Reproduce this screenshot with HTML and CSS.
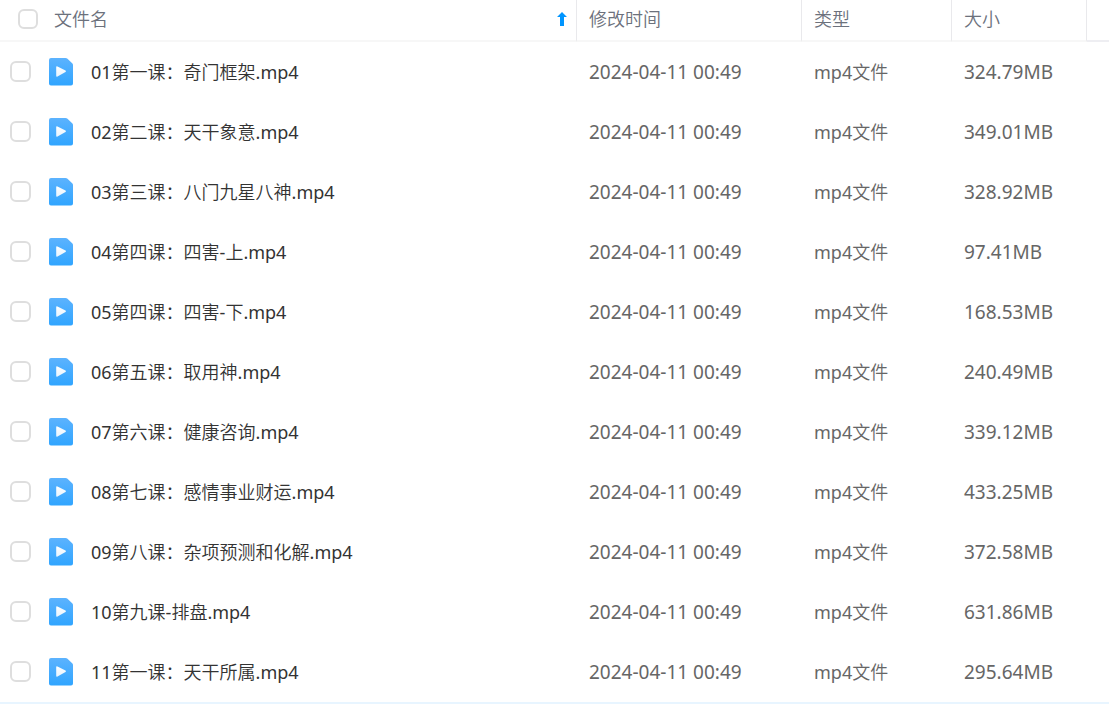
FILE: index.html
```
<!DOCTYPE html>
<html lang="zh-CN">
<head>
    <meta charset="UTF-8">
    <meta name="viewport" content="width=device-width, initial-scale=1.0">
    <title>文件列表</title>
    <link rel="stylesheet" href="styles.css">
</head>
<body>
    <svg class="sprite" aria-hidden="true">
        <defs>
            <linearGradient id="videoFill" x1="0" y1="0" x2="0" y2="1">
                <stop offset="0" stop-color="#5cb3fe"/>
                <stop offset="1" stop-color="#30a5ff"/>
            </linearGradient>
            <linearGradient id="playFill" x1="0" y1="0" x2="0" y2="1">
                <stop offset="0" stop-color="#fff"/>
                <stop offset="1" stop-color="#e6f4ff"/>
            </linearGradient>
        </defs>
        <symbol id="video" viewBox="0 0 24 28">
            <path fill="url(#videoFill)" d="M2 0h14.500q1.200 0 2 .8l4.700 4.400q.8.800.8 1.800V25.500q0 2-2 2H2q-2 0-2-2V2q0-2 2-2z"/>
            <path fill="url(#playFill)" d="M7.200 9.200q0-1.500 1.300-.8l8 4.200q1 .7 0 1.400l-8 4.600q-1.300.6-1.300-.8z"/>
        </symbol>
    </svg>
    <table class="files">
        <colgroup>
            <col>
            <col class="col-time">
            <col class="col-type">
            <col class="col-size">
            <col class="col-end">
        </colgroup>
        <thead>
            <tr>
                <th>
                    <div class="head-name">
                        <input type="checkbox" id="all">
                        <label for="all">文件名</label>
                        <svg class="sort" viewBox="0 0 10 14"><path fill="#0095ff" d="M5 0l5 5H7v9H3V5H0z"/></svg>
                    </div>
                </th>
                <th>修改时间</th>
                <th>类型</th>
                <th>大小</th>
                <th></th>
            </tr>
        </thead>
        <tbody>
            <tr>
                <td><div class="file"><input type="checkbox" id="f1"><svg class="icon"><use href="#video"/></svg><label for="f1">01第一课：奇门框架.mp4</label></div></td>
                <td class="num">2024-04-11 00:49</td>
                <td>mp4文件</td>
                <td class="num">324.79MB</td>
                <td></td>
            </tr>
            <tr>
                <td><div class="file"><input type="checkbox" id="f2"><svg class="icon"><use href="#video"/></svg><label for="f2">02第二课：天干象意.mp4</label></div></td>
                <td class="num">2024-04-11 00:49</td>
                <td>mp4文件</td>
                <td class="num">349.01MB</td>
                <td></td>
            </tr>
            <tr>
                <td><div class="file"><input type="checkbox" id="f3"><svg class="icon"><use href="#video"/></svg><label for="f3">03第三课：八门九星八神.mp4</label></div></td>
                <td class="num">2024-04-11 00:49</td>
                <td>mp4文件</td>
                <td class="num">328.92MB</td>
                <td></td>
            </tr>
            <tr>
                <td><div class="file"><input type="checkbox" id="f4"><svg class="icon"><use href="#video"/></svg><label for="f4">04第四课：四害-上.mp4</label></div></td>
                <td class="num">2024-04-11 00:49</td>
                <td>mp4文件</td>
                <td class="num">97.41MB</td>
                <td></td>
            </tr>
            <tr>
                <td><div class="file"><input type="checkbox" id="f5"><svg class="icon"><use href="#video"/></svg><label for="f5">05第四课：四害-下.mp4</label></div></td>
                <td class="num">2024-04-11 00:49</td>
                <td>mp4文件</td>
                <td class="num">168.53MB</td>
                <td></td>
            </tr>
            <tr>
                <td><div class="file"><input type="checkbox" id="f6"><svg class="icon"><use href="#video"/></svg><label for="f6">06第五课：取用神.mp4</label></div></td>
                <td class="num">2024-04-11 00:49</td>
                <td>mp4文件</td>
                <td class="num">240.49MB</td>
                <td></td>
            </tr>
            <tr>
                <td><div class="file"><input type="checkbox" id="f7"><svg class="icon"><use href="#video"/></svg><label for="f7">07第六课：健康咨询.mp4</label></div></td>
                <td class="num">2024-04-11 00:49</td>
                <td>mp4文件</td>
                <td class="num">339.12MB</td>
                <td></td>
            </tr>
            <tr>
                <td><div class="file"><input type="checkbox" id="f8"><svg class="icon"><use href="#video"/></svg><label for="f8">08第七课：感情事业财运.mp4</label></div></td>
                <td class="num">2024-04-11 00:49</td>
                <td>mp4文件</td>
                <td class="num">433.25MB</td>
                <td></td>
            </tr>
            <tr>
                <td><div class="file"><input type="checkbox" id="f9"><svg class="icon"><use href="#video"/></svg><label for="f9">09第八课：杂项预测和化解.mp4</label></div></td>
                <td class="num">2024-04-11 00:49</td>
                <td>mp4文件</td>
                <td class="num">372.58MB</td>
                <td></td>
            </tr>
            <tr>
                <td><div class="file"><input type="checkbox" id="f10"><svg class="icon"><use href="#video"/></svg><label for="f10">10第九课-排盘.mp4</label></div></td>
                <td class="num">2024-04-11 00:49</td>
                <td>mp4文件</td>
                <td class="num">631.86MB</td>
                <td></td>
            </tr>
            <tr>
                <td><div class="file"><input type="checkbox" id="f11"><svg class="icon"><use href="#video"/></svg><label for="f11">11第一课：天干所属.mp4</label></div></td>
                <td class="num">2024-04-11 00:49</td>
                <td>mp4文件</td>
                <td class="num">295.64MB</td>
                <td></td>
            </tr>
        </tbody>
    </table>
</body>
</html>
```
FILE: styles.css
```
body {
    margin: 0;
    background-color: #fff;
    color: #666;
    font-family: "Noto Sans", "Noto Sans CJK SC DemiLight", "Noto Sans CJK SC", sans-serif;
    font-size: 18px;
    line-height: 24px;
}

.sprite {
    display: block;
    width: 0;
    height: 0;
}

.files {
    width: 100%;
    table-layout: fixed;
    border-collapse: separate;
    border-spacing: 0;
    border-bottom: 2px solid #e8f5ff;
}

.col-time {
    width: 225px;
}

.col-type {
    width: 150px;
}

.col-size {
    width: 135px;
}

.col-end {
    width: 22px;
}

th {
    box-sizing: border-box;
    height: 42px;
    padding: 0 12px 2px;
    border-right: 1px solid #e9e9ec;
    border-bottom: 2px solid #f7f7f7;
    color: #6c717c;
    font-weight: 350;
    text-align: left;
    white-space: nowrap;
}

th:first-child {
    padding-left: 18px;
    padding-right: 9px;
}

th:last-child {
    padding: 0;
    border-right: none;
    border-bottom-color: #eeeef2;
}

td {
    height: 60px;
    padding: 0 12px;
    white-space: nowrap;
}

td:first-child {
    padding-left: 10px;
}

td:last-child {
    padding: 0;
}

.num {
    font-size: 19px;
}

.head-name,
.file {
    display: flex;
    align-items: center;
}

.file {
    padding-bottom: 1px;
}

.head-name label {
    flex: 1;
    margin-left: 16px;
}

.file label {
    margin-left: 18px;
    color: #333;
}

input[type="checkbox"] {
    appearance: none;
    box-sizing: border-box;
    flex: none;
    width: 21px;
    height: 21px;
    margin: 0;
    border: 2px solid #dedede;
    border-radius: 6px;
    background-color: #fff;
}

.head-name input[type="checkbox"] {
    width: 20px;
    height: 20px;
}

.icon {
    flex: none;
    width: 24px;
    height: 28px;
    margin-left: 18px;
}

.sort {
    width: 10px;
    height: 14px;
}
```
